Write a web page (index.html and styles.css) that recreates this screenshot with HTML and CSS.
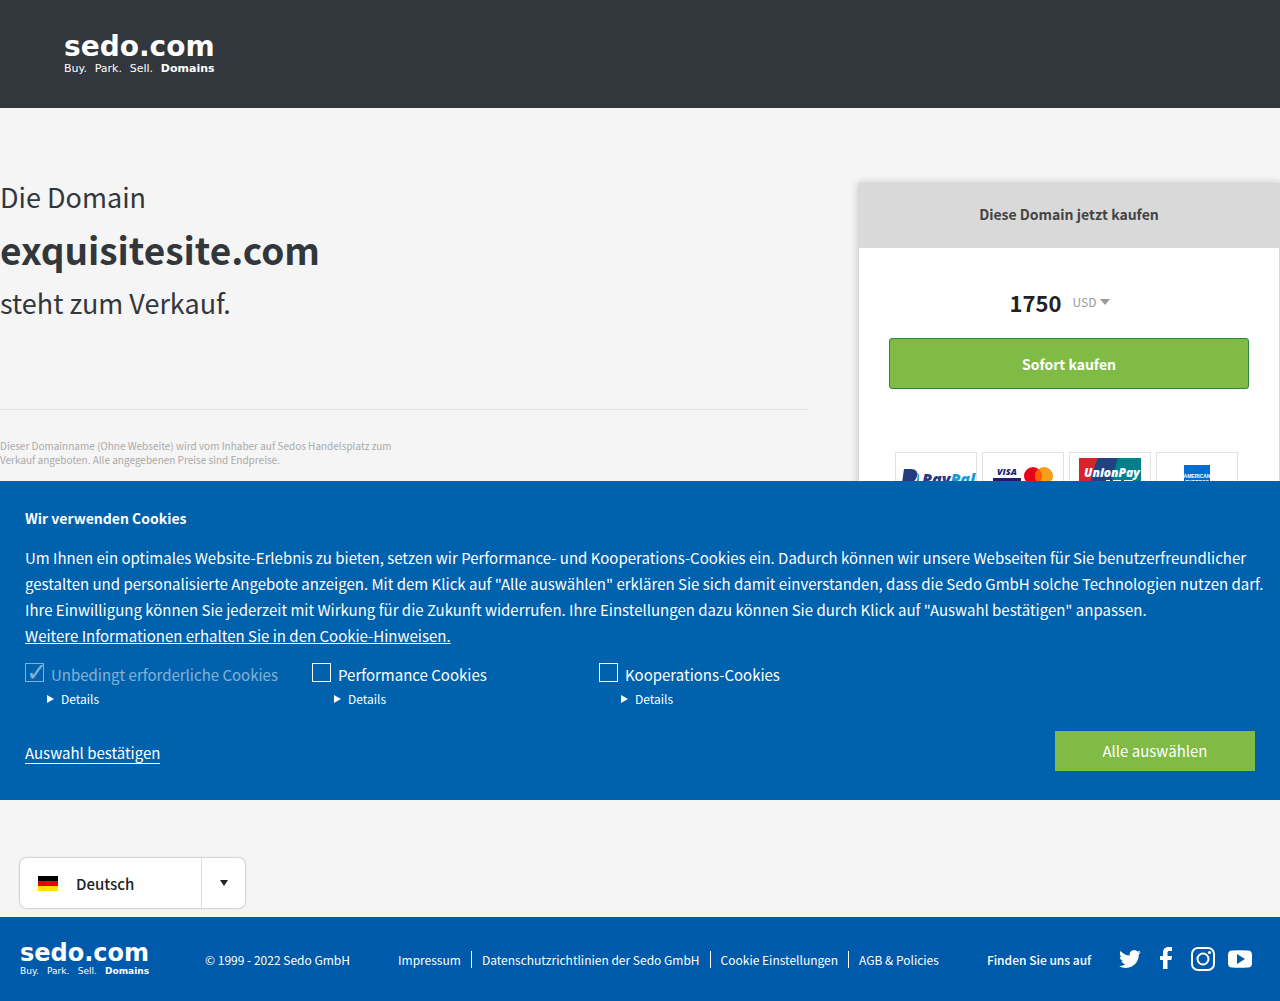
FILE: index.html
```html
<!DOCTYPE html>
<html lang="de">
<head>
    <meta charset="UTF-8">
    <meta name="viewport" content="width=device-width, initial-scale=1.0">
    <title>exquisitesite.com steht zum Verkauf</title>
    <link rel="stylesheet" href="styles.css">
</head>
<body>
    <header class="header">
        <a class="logo" href="#">
            <span class="logo-name">sedo.com</span>
            <span class="logo-claim"><span>Buy.</span><span>Park.</span><span>Sell.</span><b>Domains</b></span>
        </a>
    </header>

    <main class="main">
        <div class="offer">
            <section class="domain">
                <h1 class="domain-title">Die Domain <strong>exquisitesite.com</strong> steht zum Verkauf.</h1>
                <p class="disclaimer">Dieser Domainname (Ohne Webseite) wird vom Inhaber auf Sedos Handelsplatz zum Verkauf angeboten. Alle angegebenen Preise sind Endpreise.</p>
            </section>

            <section class="card">
                <h2 class="card-title">Diese Domain jetzt kaufen</h2>
                <div class="card-body">
                    <div class="price">
                        <span class="price-value">1750</span>
                        <span class="currency">
                            <select aria-label="Währung">
                                <option>USD</option>
                            </select>
                            <svg width="10" height="6" viewBox="0 0 10 6"><path d="M0 0h10L5 6z" fill="#999"/></svg>
                        </span>
                    </div>
                    <button class="buy" type="button">Sofort kaufen</button>
                    <ul class="payments">
                        <li>
                            <svg viewBox="0 0 80 56">
                                <path d="M8 16h7c5 0 7 3 6 7-1 5-5 7-10 7l-2 7H5z" fill="#253b80"/>
                                <path d="M20 19c2 2 2 5 1 8-2 4-6 4-9 4l-2 9h4l2-7c5 0 7-3 7-8 1-3-1-5-3-6z" fill="#179bd7"/>
                                <text class="brand" x="26" y="32" font-size="16" fill="#253b80">Pay<tspan fill="#179bd7">Pal</tspan></text>
                            </svg>
                        </li>
                        <li>
                            <svg viewBox="0 0 80 56">
                                <text class="brand" x="14" y="22" font-size="9" fill="#1a1f71">VISA</text>
                                <path d="M10 25h28v18H10z" fill="#1a1f71"/>
                                <circle cx="50" cy="23" r="9" fill="#eb001b"/>
                                <circle cx="61" cy="23" r="9" fill="#f79e1b"/>
                                <path d="M55.500 15.900a9 9 0 0 1 0 14.200a9 9 0 0 1 0-14.200z" fill="#ff5f00"/>
                            </svg>
                        </li>
                        <li>
                            <svg viewBox="0 0 80 56">
                                <path d="M9 5h20l-8 40H9z" fill="#d9222a"/>
                                <path d="M28 5h21l-8 40H20c0-15 2-28 8-40z" fill="#20427f"/>
                                <path d="M48 5h23v40H40c1-15 4-28 8-40z" fill="#00808a"/>
                                <text class="brand" x="14" y="24" font-size="12" fill="#fff">UnionPay</text>
                                <path d="M36 27h4v1h-4zM43 27h8v1h-8zM54 27h9v1h-9z" fill="#fff"/>
                            </svg>
                        </li>
                        <li>
                            <svg viewBox="0 0 80 56">
                                <path d="M27 12h26v28H27z" fill="#016fd0"/>
                                <text class="amex" x="40" y="25">AMERICAN</text>
                                <text class="amex" x="40" y="31">EXPRESS</text>
                            </svg>
                        </li>
                    </ul>
                </div>
            </section>
        </div>

        <div class="language">
            <svg width="20" height="15" viewBox="0 0 20 15"><path d="M0 0h20v5H0z"/><path d="M0 5h20v5H0z" fill="#e00"/><path d="M0 10h20v5H0z" fill="#ffe000"/></svg>
            <select aria-label="Sprache">
                <option>Deutsch</option>
            </select>
            <span class="language-arrow"><svg width="8" height="6" viewBox="0 0 8 6"><path d="M0 0h8L4 6z" fill="#222"/></svg></span>
        </div>

        <form class="cookies">
            <h2>Wir verwenden Cookies</h2>
            <p>Um Ihnen ein optimales Website-Erlebnis zu bieten, setzen wir Performance- und Kooperations-Cookies ein. Dadurch können wir unsere Webseiten für Sie benutzerfreundlicher gestalten und personalisierte Angebote anzeigen. Mit dem Klick auf "Alle auswählen" erklären Sie sich damit einverstanden, dass die Sedo GmbH solche Technologien nutzen darf. Ihre Einwilligung können Sie jederzeit mit Wirkung für die Zukunft widerrufen. Ihre Einstellungen dazu können Sie durch Klick auf "Auswahl bestätigen" anpassen.<br><a href="#">Weitere Informationen erhalten Sie in den Cookie-Hinweisen.</a></p>
            <div class="cookie-options">
                <div class="cookie-option">
                    <label class="disabled"><input type="checkbox" checked disabled>Unbedingt erforderliche Cookies</label>
                    <details><summary>Details</summary></details>
                </div>
                <div class="cookie-option">
                    <label><input type="checkbox">Performance Cookies</label>
                    <details><summary>Details</summary></details>
                </div>
                <div class="cookie-option">
                    <label><input type="checkbox">Kooperations-Cookies</label>
                    <details><summary>Details</summary></details>
                </div>
            </div>
            <div class="cookie-actions">
                <button class="confirm" type="button">Auswahl bestätigen</button>
                <button class="accept" type="button">Alle auswählen</button>
            </div>
        </form>
    </main>

    <footer class="footer">
        <a class="logo logo-small" href="#">
            <span class="logo-name">sedo.com</span>
            <span class="logo-claim"><span>Buy.</span><span>Park.</span><span>Sell.</span><b>Domains</b></span>
        </a>
        <span class="copyright">© 1999 - 2022 Sedo GmbH</span>
        <nav class="footer-links">
            <a href="#">Impressum</a>
            <a href="#">Datenschutzrichtlinien der Sedo GmbH</a>
            <a href="#">Cookie Einstellungen</a>
            <a href="#">AGB &amp; Policies</a>
        </nav>
        <div class="social">
            <span>Finden Sie uns auf</span>
            <a href="#" aria-label="Twitter"><svg width="22" height="24" viewBox="0 0 24 24"><path d="M23.950 4.570a10 10 0 0 1-2.820.77 4.960 4.960 0 0 0 2.160-2.720c-.95.550-2 .96-3.130 1.180a4.920 4.920 0 0 0-8.380 4.480C7.690 8.100 4.070 6.130 1.640 3.160a4.820 4.820 0 0 0-.67 2.480c0 1.710.87 3.210 2.190 4.100a4.900 4.900 0 0 1-2.230-.62v.06a4.920 4.920 0 0 0 3.950 4.830 5 5 0 0 1-2.210.080 4.940 4.940 0 0 0 4.600 3.420A9.870 9.870 0 0 1 0 19.540a14 14 0 0 0 7.550 2.210c9.050 0 14-7.500 14-13.990 0-.21 0-.42-.02-.63a9.940 9.940 0 0 0 2.420-2.560z"/></svg></a>
            <a href="#" aria-label="Facebook"><svg width="24" height="24" viewBox="0 0 24 24"><path d="M9 22V13H6V9h3V6c0-3.800 2-6 5.500-6H18v4h-2.500c-1.500 0-2 .6-2 2v3H18l-.6 4h-3.900v9z"/></svg></a>
            <a href="#" aria-label="Instagram"><svg width="24" height="24" viewBox="0 0 24 24"><g fill="none" stroke="#fff" stroke-width="2"><rect x="1" y="1" width="22" height="22" rx="6"/><circle cx="12" cy="12" r="5.500"/></g><circle cx="18.500" cy="5.500" r="1.600"/></svg></a>
            <a href="#" aria-label="YouTube"><svg width="24" height="24" viewBox="0 0 24 24"><path fill-rule="evenodd" d="M4 3.500Q12 3 20 3.500Q24 3.500 24 8V16Q24 20.500 20 20.500Q12 21 4 20.500Q0 20.500 0 16V8Q0 3.500 4 3.500zM9 7v10l8-5z"/></svg></a>
        </div>
    </footer>
</body>
</html>
```
FILE: styles.css
```css
* {
    box-sizing: border-box;
}
body {
    margin: 0;
    background: #f5f5f5;
    color: #32373c;
    font-family: "Noto Sans CJK SC", "Noto Sans", sans-serif;
    font-size: 15px;
}
h1, h2, p, ul {
    margin: 0;
    padding: 0;
}
button, select, input {
    font: inherit;
    color: inherit;
    margin: 0;
}
select {
    appearance: none;
    border: 0;
    background: none;
    padding: 0;
}
.header {
    background: #32373e;
    height: 108px;
    padding: 32px 64px;
}

/* Logo */
.logo {
    display: inline-block;
    color: #fff;
    text-decoration: none;
    font-family: Verdana, "DejaVu Sans", sans-serif;
}
.logo-name {
    display: block;
    font-size: 28px;
    line-height: 30px;
    font-weight: bold;
}
.logo-claim {
    display: flex;
    justify-content: space-between;
    font-size: 11px;
    line-height: 13px;
}
.logo-small {
    margin-right: 8px;
}
.logo-small .logo-name {
    font-size: 24px;
    line-height: 24px;
}
.logo-small .logo-claim {
    font-size: 9px;
    line-height: 12px;
}

/* Offer */
.main {
    position: relative;
    padding-bottom: 8px;
}
.offer {
    display: grid;
    grid-template-columns: 1fr 422px;
    gap: 50px;
    align-items: start;
    min-height: 749px;
    padding-top: 62px;
}
.domain-title {
    padding-bottom: 80px;
    border-bottom: 1px solid #e2e2e2;
    font-size: 27px;
    font-weight: normal;
    line-height: 53px;
}
.domain-title strong {
    display: block;
    font-size: 37px;
}
.disclaimer {
    max-width: 400px;
    margin-top: 29px;
    color: #aaa;
    font-size: 10px;
    line-height: 14px;
}
.card {
    margin-top: 13px;
    background: #fff;
    border: 1px solid #d9d9d9;
    box-shadow: 0 0 8px rgba(0, 0, 0, 0.2);
}
.card-title {
    padding-bottom: 4px;
    background: #d9d9d9;
    color: #444;
    font-size: 14px;
    line-height: 60px;
    text-align: center;
}
.card-body {
    padding: 34px 30px;
}
.price {
    display: flex;
    justify-content: center;
    align-items: center;
    gap: 11px;
    padding-right: 18px;
    line-height: 40px;
}
.price-value {
    color: #222;
    font-size: 22px;
    font-weight: bold;
}
.currency {
    display: flex;
    align-items: center;
    gap: 4px;
    color: #999;
    font-size: 12px;
}
.buy {
    display: block;
    width: 100%;
    height: 51px;
    margin-top: 16px;
    border: 1px solid #2f8540;
    border-radius: 3px;
    background: #80bb45;
    color: #fff;
    font-size: 14px;
    font-weight: bold;
}
.payments {
    display: flex;
    gap: 5px;
    margin: 63px 0 0 6px;
    list-style: none;
}
.payments li {
    width: 82px;
    height: 58px;
    border: 1px solid #e2e2e2;
}
.payments svg {
    display: block;
}
.brand {
    font-family: "Open Sans", sans-serif;
    font-style: italic;
    font-weight: 800;
}
.amex {
    fill: #fff;
    font-family: "Liberation Sans", sans-serif;
    font-size: 5px;
    font-weight: bold;
    text-anchor: middle;
}

/* Language */
.language {
    display: flex;
    align-items: center;
    gap: 18px;
    width: 227px;
    height: 52px;
    margin-left: 19px;
    padding-left: 18px;
    border: 1px solid #d5d5d5;
    border-radius: 8px;
    background: #fff;
    box-shadow: 0 0 2px rgba(0, 0, 0, 0.1);
    color: #222;
}
.language select {
    flex: 1;
    font-weight: 500;
}
.language-arrow {
    display: flex;
    align-items: center;
    justify-content: center;
    width: 44px;
    height: 100%;
    border-left: 1px solid #ddd;
}

/* Cookie banner */
.cookies {
    position: absolute;
    right: 0;
    bottom: 117px;
    left: 0;
    padding: 24px 25px 29px;
    background: #0061ad;
    color: #fff;
    line-height: 26px;
}
.cookies h2 {
    margin-bottom: 14px;
    font-size: 14px;
}
.cookies p {
    margin-right: -20px;
}
.cookies a {
    color: inherit;
}
.cookie-options {
    display: flex;
    gap: 36px;
    margin-top: 14px;
}
.cookie-option {
    width: 251px;
    line-height: 24px;
}
.cookie-option label {
    display: flex;
    gap: 7px;
    white-space: nowrap;
}
.cookie-option .disabled {
    opacity: 0.5;
}
.cookie-option input {
    appearance: none;
    width: 19px;
    height: 19px;
    border: 1px solid #fff;
}
.cookie-option input:checked::after {
    content: "✓";
    display: block;
    font: bold 26px/17px "DejaVu Sans", sans-serif;
}
.cookie-option details {
    padding-left: 22px;
    font-size: 12px;
}
.cookie-option summary {
    display: flex;
    align-items: center;
    gap: 7px;
}
.cookie-option summary::before {
    content: "";
    border: 4px solid transparent;
    border-left: 7px solid #fff;
    border-right: 0;
}
.cookie-actions {
    display: flex;
    align-items: flex-end;
    justify-content: space-between;
    margin-top: 20px;
}
.confirm {
    margin-bottom: 7px;
    padding: 0;
    border: 0;
    border-bottom: 1px solid #fff;
    background: none;
    line-height: 20px;
}
.accept {
    width: 200px;
    height: 40px;
    border: 0;
    background: #80bb45;
}

/* Footer */
.footer {
    display: flex;
    align-items: center;
    gap: 48px;
    height: 84px;
    padding: 0 28px 0 20px;
    background: #005aab;
    color: #fff;
    font-size: 12px;
    white-space: nowrap;
}
.footer a {
    color: inherit;
    text-decoration: none;
}
.footer-links {
    display: flex;
    line-height: 17px;
}
.footer-links a + a {
    margin-left: 10px;
    padding-left: 10px;
    border-left: 1px solid #fff;
}
.social {
    display: flex;
    align-items: center;
    gap: 13px;
    margin-left: auto;
    font-weight: 500;
}
.social span {
    margin-right: 15px;
}
.social svg {
    display: block;
    fill: #fff;
}
```
